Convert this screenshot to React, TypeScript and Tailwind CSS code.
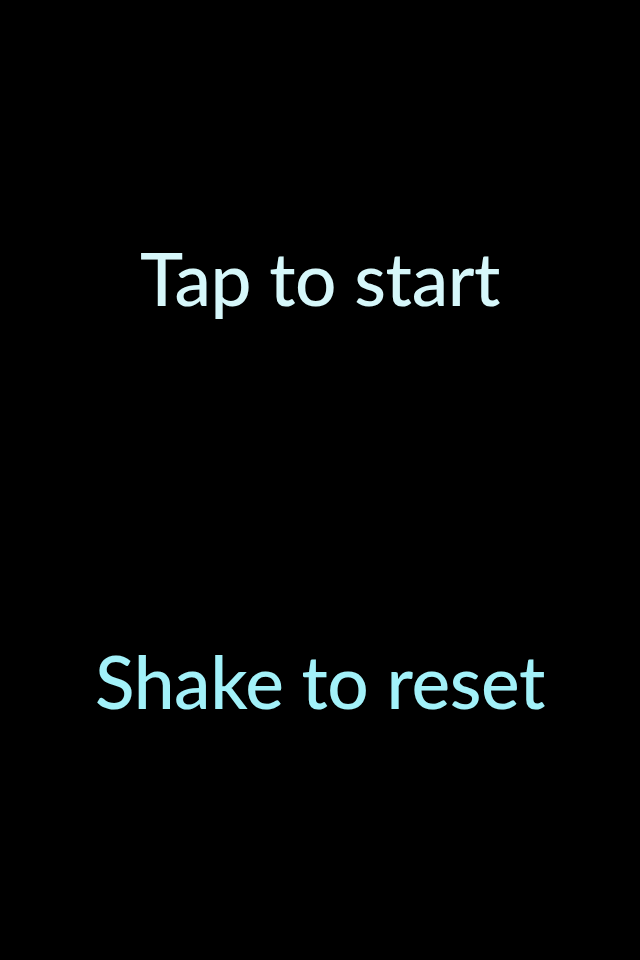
export default function App() {
  return (
    <div className="flex h-[960px] w-full flex-col items-center bg-black font-['Lato',sans-serif]">
      <p className="mt-[242px] text-[73px] font-medium leading-none tracking-[-0.4px] text-[#d6f7fa]">
        Tap to start
      </p>
      <p className="mt-[330px] text-[73px] font-medium leading-none tracking-[-0.4px] text-[#a2f1f9]">
        Shake to reset
      </p>
    </div>
  );
}
